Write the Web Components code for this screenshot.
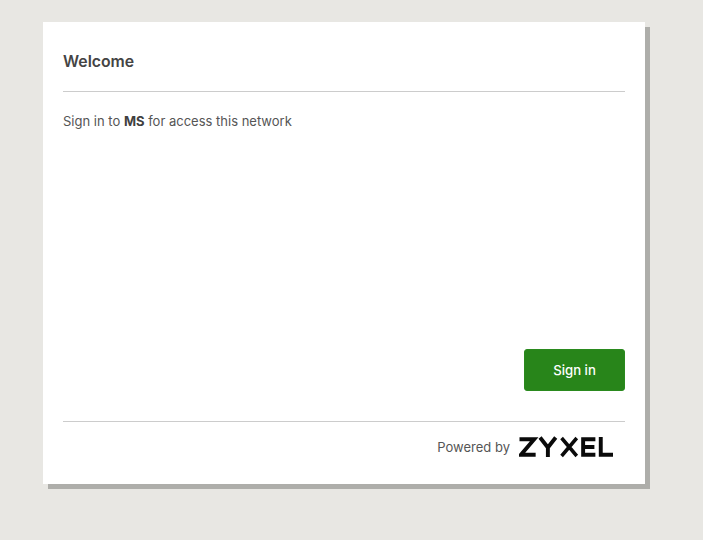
<!DOCTYPE html>
<html>
<head>
<meta charset="utf-8">
<title>Welcome</title>
<style>
    html, body { margin: 0; height: 100%; }
    body { background: #e8e7e3; font-family: Inter, "Liberation Sans", sans-serif; }
    b { color: #404040; }
</style>
</head>
<body>
<login-page>
    <login-card>
        <span slot="title">Welcome</span>
        Sign in to <b>MS</b> for access this network
    </login-card>
</login-page>

<script>
class LoginPage extends HTMLElement {
    constructor() {
        super();
        this.attachShadow({ mode: 'open' });
        this.shadowRoot.innerHTML = `
            <style>
                :host {
                    display: block;
                    padding: 22px 58px 0 43px;
                }
            </style>
            <slot></slot>
        `;
    }
}

class ZyxelLogo extends HTMLElement {
    constructor() {
        super();
        this.attachShadow({ mode: 'open' });
        this.shadowRoot.innerHTML = `
            <style>
                :host { display: block; width: 94px; height: 22px; }
                svg { display: block; }
            </style>
            <svg width="94" height="22" viewBox="0 0 96 22" preserveAspectRatio="none" fill="none" stroke="#0a0a0a" stroke-width="4" role="img" aria-label="Zyxel">
                <path d="M0.500 3.200H15.500L2 18.800H17"/>
                <path d="M21.500 1.500L29.500 11.500L37.500 1.500M29.500 11V21"/>
                <path d="M43.500 2L59 20M59 2L43.500 20" stroke-width="3.600"/>
                <path d="M78 3.200H65.500V18.800H78M65.500 11H77"/>
                <path d="M83.500 1V18.800H96"/>
            </svg>
        `;
    }
}

class LoginCard extends HTMLElement {
    constructor() {
        super();
        this.attachShadow({ mode: 'open' });
        this.shadowRoot.innerHTML = `
            <style>
                :host {
                    display: flex;
                    flex-direction: column;
                    box-sizing: border-box;
                    height: 462px;
                    padding: 0 20px;
                    background: #fff;
                    box-shadow: 5px 5px 0 #aeaeaa;
                    color: #555;
                }
                h1 {
                    margin: 0;
                    height: 70px;
                    box-sizing: border-box;
                    padding-top: 30px;
                    border-bottom: 1px solid #cccccc;
                    font-size: 15.800px;
                    line-height: 20px;
                    font-weight: 600;
                    color: #444;
                }
                .body {
                    flex: 1;
                    padding-top: 20px;
                    font-size: 13px;
                    line-height: 18px;
                }
                .actions {
                    display: flex;
                    justify-content: flex-end;
                    padding-bottom: 30px;
                }
                button {
                    width: 101px;
                    height: 42px;
                    border: 1px solid #2a8a1e;
                    border-radius: 3px;
                    background: #28851a;
                    color: #fff;
                    font: 500 13.200px Inter, "Liberation Sans", sans-serif;
                }
                footer {
                    display: flex;
                    justify-content: flex-end;
                    align-items: center;
                    gap: 9px;
                    height: 63px;
                    box-sizing: border-box;
                    padding: 0 12px 13px 0;
                    border-top: 1px solid #cccccc;
                    font-size: 13px;
                    color: #555;
                }
            </style>
            <h1><slot name="title"></slot></h1>
            <div class="body"><slot></slot></div>
            <div class="actions"><button type="button">Sign in</button></div>
            <footer>Powered by <zyxel-logo></zyxel-logo></footer>
        `;
    }
}

customElements.define('login-page', LoginPage);
customElements.define('zyxel-logo', ZyxelLogo);
customElements.define('login-card', LoginCard);
</script>
</body>
</html>
